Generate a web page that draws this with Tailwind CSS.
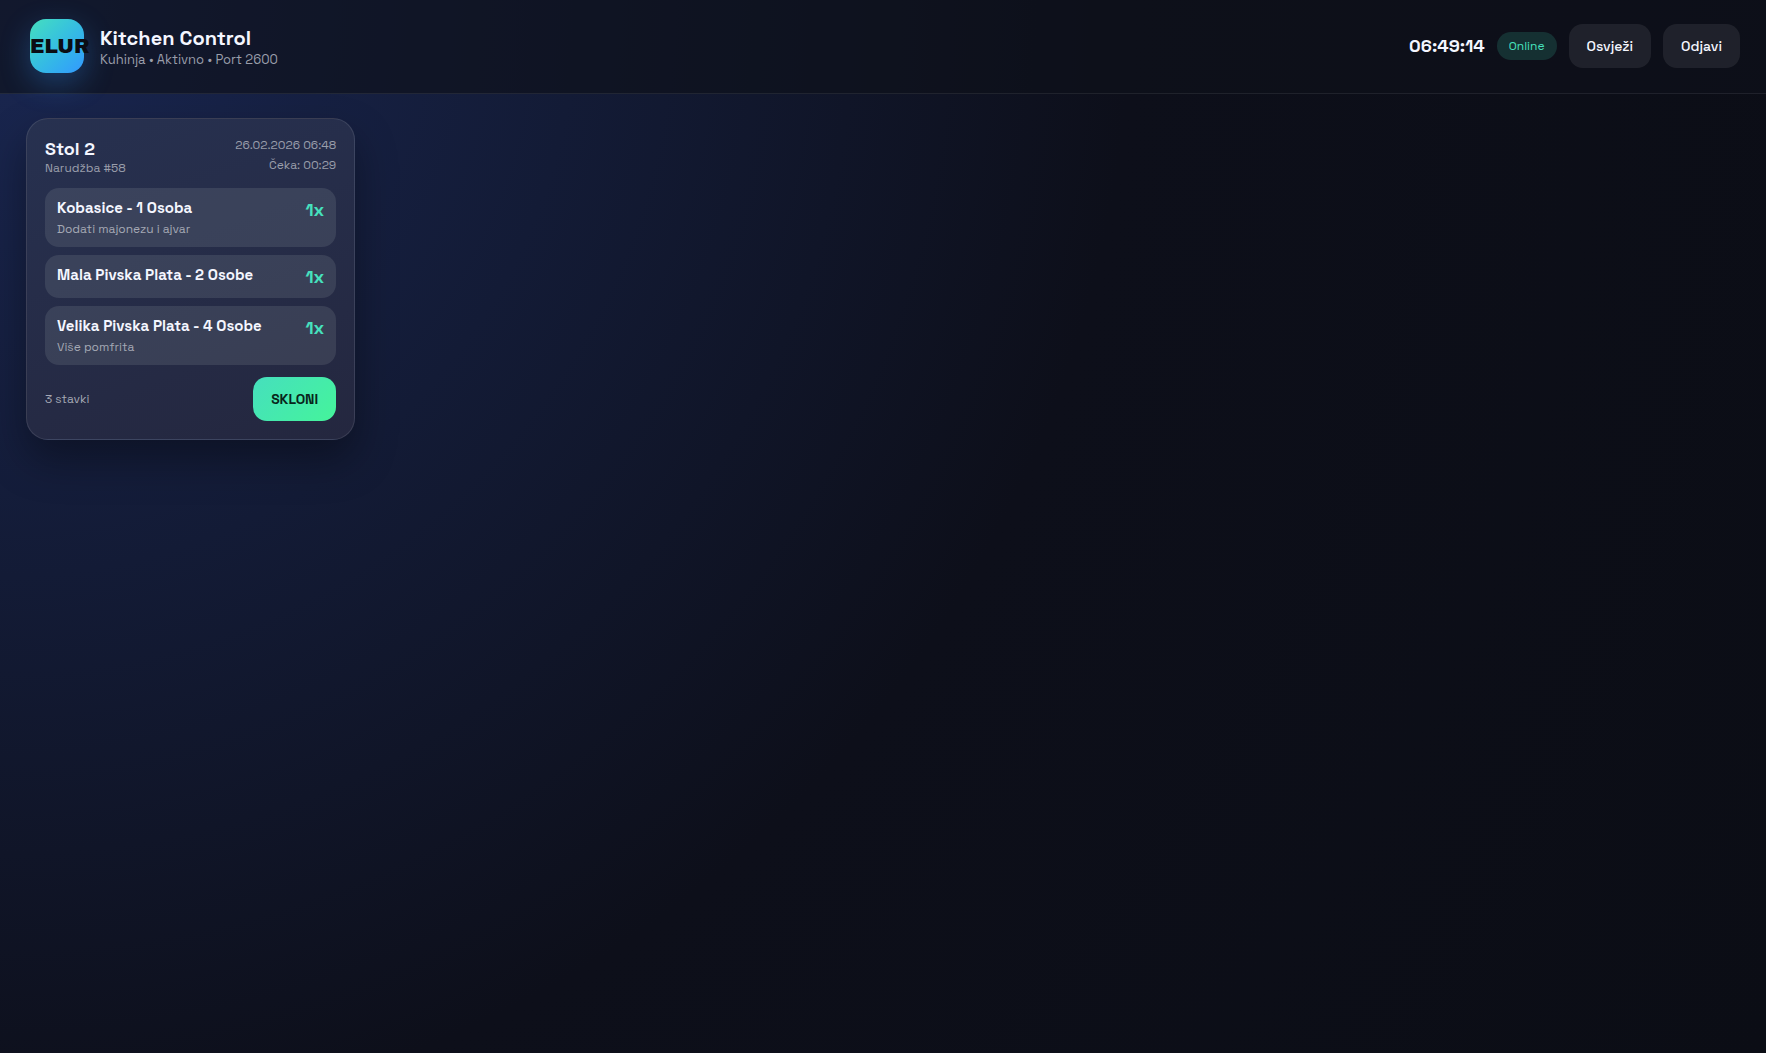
<!doctype html>
<html lang="hr">
 <head>
    <meta charset="UTF-8" />
    <meta name="viewport" content="width=device-width, initial-scale=1.0" />
    <title>Kitchen Control</title>
    <script src="https://cdn.jsdelivr.net/npm/@tailwindcss/browser@4"></script>
 </head>
 <body class="min-h-screen bg-[#0c0e18] bg-[radial-gradient(circle_at_top_left,#1a2752_0%,#131b36_28%,#0d0f1a_55%,#0b0d15_100%)] font-['Space_Grotesk',Inter,sans-serif] text-[#f4f6ff]">
    <!-- Header with logo, clock and actions -->
    <header class="flex flex-wrap items-center justify-between gap-3 border-b border-white/8 bg-[#0e111a]/65 px-[26px] pt-[19px] pb-5">
        <div class="flex items-center gap-4 pl-1">
            <div class="flex size-[54px] items-center rounded-2xl bg-linear-135 from-[#46dfbd] to-[#3498ff] font-['Archivo_Black',Inter,sans-serif] text-xl text-[#0b0d14] shadow-[0_10px_30px_rgba(52,152,255,0.3)]">
                <span>ELUR</span>
            </div>
            <div class="pt-1.5">
                <h1 class="text-xl leading-[22px] font-bold">Kitchen Control</h1>
                <p class="text-[13px] leading-[22px] text-[#9a9eab]">Kuhinja • Aktivno • Port 2600</p>
            </div>
        </div>
        <div class="flex items-center gap-3">
            <span class="text-lg font-bold">06:49:14</span>
            <span class="rounded-full bg-[#46e0bd]/16 px-3 text-xs leading-7 text-[#46e0bd]">Online</span>
            <button type="button" class="h-11 rounded-[14px] bg-white/8 px-[18px] text-sm font-medium hover:bg-white/15">Osvježi</button>
            <button type="button" class="h-11 rounded-[14px] bg-white/8 px-[18px] text-sm font-medium hover:bg-white/15">Odjavi</button>
        </div>
    </header>

    <!-- Orders -->
    <main class="grid grid-cols-[repeat(auto-fill,minmax(320px,1fr))] gap-[17px] px-[26px] py-6">
        <article class="flex flex-col gap-3 rounded-[22px] border border-white/10 bg-linear-160 from-[#273150] to-[#24273f] p-[18px] shadow-[0_20px_40px_rgba(0,0,0,0.35)]">
            <div class="flex justify-between">
                <div class="pt-px">
                    <h2 class="text-lg leading-[22px] font-bold">Stol 2</h2>
                    <p class="text-xs leading-4 text-[#9a9eab]">Narudžba #58</p>
                </div>
                <div class="-mt-0.5 text-right text-xs leading-5 text-[#9a9eab]">
                    <p>26.02.2026 06:48</p>
                    <p>Čeka: 00:29</p>
                </div>
            </div>
            <ul class="flex flex-col gap-2">
                <li class="flex justify-between rounded-[14px] bg-[#e6f0e6]/11 px-3 py-2.5">
                    <div>
                        <h3 class="text-[15px] leading-[19px] font-semibold">Kobasice - 1 Osoba</h3>
                        <p class="mt-1 text-xs leading-4 text-[#a4a8b4]">Dodati majonezu i ajvar</p>
                    </div>
                    <span class="text-lg leading-[23px] font-bold text-[#46e0bd]">1x</span>
                </li>
                <li class="flex justify-between rounded-[14px] bg-[#e6f0e6]/11 px-3 py-2.5">
                    <h3 class="text-[15px] leading-[19px] font-semibold">Mala Pivska Plata - 2 Osobe</h3>
                    <span class="text-lg leading-[23px] font-bold text-[#46e0bd]">1x</span>
                </li>
                <li class="flex justify-between rounded-[14px] bg-[#e6f0e6]/11 px-3 py-2.5">
                    <div>
                        <h3 class="text-[15px] leading-[19px] font-semibold">Velika Pivska Plata - 4 Osobe</h3>
                        <p class="mt-1 text-xs leading-4 text-[#a4a8b4]">Više pomfrita</p>
                    </div>
                    <span class="text-lg leading-[23px] font-bold text-[#46e0bd]">1x</span>
                </li>
            </ul>
            <div class="flex items-center justify-between">
                <span class="text-xs text-[#a4a8b4]">3 stavki</span>
                <button type="button" class="h-11 rounded-[14px] bg-linear-135 from-[#46dfbd] to-[#45f49a] px-[18px] text-sm font-bold text-[#08251b] hover:brightness-110">SKLONI</button>
            </div>
        </article>
    </main>
 </body>
</html>
